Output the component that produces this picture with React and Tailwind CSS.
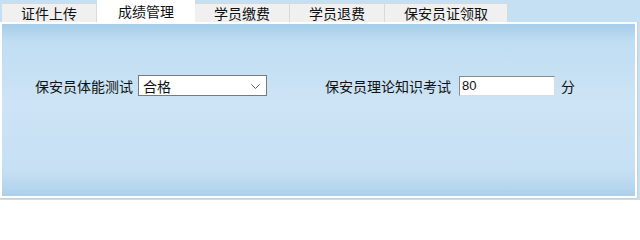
import React from "react";

const tabs = [
  { name: "证件上传", w: "w-[95px]" },
  { name: "成绩管理", w: "w-[98px]", active: true },
  { name: "学员缴费", w: "w-[95px]" },
  { name: "学员退费", w: "w-[95px]" },
  { name: "保安员证领取", w: "w-[123px]" },
];

const font = {
  fontFamily: '"Noto Sans CJK SC", "Noto Sans", sans-serif',
};

const App = () => {
  return (
    <div
      className="w-[640px] h-[200px] bg-[#c5e0f3] flex flex-col overflow-hidden text-[#111]"
      style={font}
    >
      {/* tab strip */}
      <div className="flex items-end h-[22px] pl-[2px] relative z-10">
        {tabs.map((t) =>
          t.active ? (
            <div
              key={t.name}
              className={`${t.w} h-[24px] -mb-[2px] bg-white flex items-center justify-center text-[14px] leading-none pb-[3px]`}
            >
              {t.name}
            </div>
          ) : (
            <div
              key={t.name}
              className={`${t.w} h-[19px] bg-[#f0f0f0] border-t border-r border-[#d9d9d9] flex items-center justify-center text-[14px] leading-none`}
            >
              {t.name}
            </div>
          )
        )}
      </div>

      {/* content panel */}
      <div className="w-[638px] h-[177px] border-r border-b border-[#cfcfcf]">
        <div className="h-full border-2 border-white bg-[linear-gradient(to_bottom,#a6cdea_0%,#c0ddf2_10%,#cce4f5_45%,#c6e0f3_85%,#b4d5ee_96%,#a9cfeb_100%)]">
          <div className="flex items-center pt-[51px] pl-[33px] text-[14px] leading-none">
            <span>保安员体能测试</span>
            <div className="ml-[5px] w-[129px] h-[21px] bg-white border border-[#7a7a7a] flex items-center justify-between pl-[4px] pr-[6px]">
              <span>合格</span>
              <svg width="9" height="5" viewBox="0 0 9 5" className="mt-[1px]">
                <path d="M0.5 0.5 L4.5 4.5 L8.5 0.5" fill="none" stroke="#606060" strokeWidth="1" />
              </svg>
            </div>

            <span className="ml-[58px]">保安员理论知识考试</span>
            <div
              className="ml-[8px] w-[96px] h-[20px] bg-white border border-[#8a8a8a] border-r-[#dcdcdc] border-b-[#dcdcdc] flex items-center pl-[2px] text-[13px]"
              style={{ fontFamily: '"Liberation Sans", Arial, sans-serif' }}
            >
              80
            </div>
            <span className="ml-[6px]">分</span>
          </div>
        </div>
      </div>
    </div>
  );
};

export default App;
